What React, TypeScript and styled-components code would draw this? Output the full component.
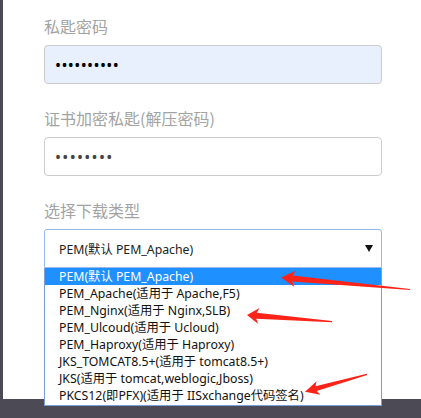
import React from "react";
import styled, { createGlobalStyle } from "styled-components";

const GlobalStyle = createGlobalStyle`
  html, body {
    margin: 0;
    padding: 0;
    background: #4b4a55;
    overflow: hidden;
  }
  * { box-sizing: border-box; }
`;

const FONT = `"Noto Sans", "Noto Sans CJK SC", sans-serif`;

const Screen = styled.div`
  position: relative;
  width: 421px;
  height: 418px;
  padding-left: 3px;
`;

const Panel = styled.div`
  position: relative;
  height: 399px;
  background: #ffffff;
  padding: 15px 0 0 41px;
  font-family: ${FONT};
`;

const Field = styled.div<{ $first?: boolean }>`
  display: flex;
  flex-direction: column;
  margin-top: ${(p) => (p.$first ? 0 : 23)}px;
  width: 338px;
`;

const Label = styled.label`
  display: block;
  font-size: 16px;
  line-height: 22px;
  color: #a3a3a3;
  margin-bottom: 8px;
  font-family: "Noto Sans CJK SC", sans-serif;
`;

const PasswordInput = styled.input<{ $autofill?: boolean; $dot: string; $spacing: number }>`
  width: 338px;
  height: 39px;
  border: 1px solid #cccccc;
  border-radius: 4px;
  background: ${(p) => (p.$autofill ? "#e8f0fe" : "#ffffff")};
  padding: 0 0 0 10px;
  font-size: 16px;
  font-family: "Noto Sans", sans-serif;
  color: ${(p) => p.$dot};
  letter-spacing: ${(p) => p.$spacing}px;
  outline: none;
`;

const SelectWrap = styled.div`
  position: relative;
  width: 338px;
`;

const SelectBox = styled.div`
  display: flex;
  align-items: center;
  justify-content: space-between;
  height: 39px;
  border: 1px solid #98b8ee;
  border-radius: 3px 3px 0 0;
  padding: 0 8px 0 14px;
  font-size: 12.3px;
  color: #222;
  background: #fff;
`;

const Caret = styled.svg`
  width: 8px;
  height: 7px;
  flex: none;
`;

const OptionList = styled.ul`
  position: absolute;
  left: 0;
  top: 39px;
  width: 338px;
  margin: 0;
  padding: 0 0 1px 0;
  list-style: none;
  background: #fff;
  border: 1px solid #7a9fd9;
  border-top: none;
  z-index: 2;
`;

const OptionItem = styled.li<{ $active?: boolean }>`
  height: 17px;
  line-height: 17px;
  padding-left: 14px;
  font-size: 12.3px;
  white-space: nowrap;
  overflow: hidden;
  color: ${(p) => (p.$active ? "#ffffff" : "#111111")};
  background: ${(p) => (p.$active ? "#1e90ff" : "transparent")};
`;

const Overlay = styled.svg`
  position: absolute;
  left: 0;
  top: 0;
  width: 421px;
  height: 418px;
  pointer-events: none;
  z-index: 5;
`;

type Pt = [number, number];

function arrowPoints(tip: Pt, tail: Pt, headLen: number, headHalf: number, shaftHalf: number): string {
  const dx = tail[0] - tip[0];
  const dy = tail[1] - tip[1];
  const len = Math.sqrt(dx * dx + dy * dy);
  const ux = dx / len;
  const uy = dy / len;
  const px = -uy;
  const py = ux;
  const base: Pt = [tip[0] + ux * headLen, tip[1] + uy * headLen];
  const neck: Pt = [tip[0] + ux * (headLen - 2.5), tip[1] + uy * (headLen - 2.5)];
  const pts: Pt[] = [
    tip,
    [base[0] + px * headHalf, base[1] + py * headHalf],
    [neck[0] + px * shaftHalf, neck[1] + py * shaftHalf],
    [tail[0] + px * 0.6, tail[1] + py * 0.6],
    [tail[0] - px * 0.6, tail[1] - py * 0.6],
    [neck[0] - px * shaftHalf, neck[1] - py * shaftHalf],
    [base[0] - px * headHalf, base[1] - py * headHalf],
  ];
  return pts.map((p) => `${p[0].toFixed(1)},${p[1].toFixed(1)}`).join(" ");
}

const options = [
  "PEM(默认 PEM_Apache)",
  "PEM_Apache(适用于 Apache,F5)",
  "PEM_Nginx(适用于 Nginx,SLB)",
  "PEM_Ulcoud(适用于 Ucloud)",
  "PEM_Haproxy(适用于 Haproxy)",
  "JKS_TOMCAT8.5+(适用于 tomcat8.5+)",
  "JKS(适用于 tomcat,weblogic,Jboss)",
  "PKCS12(即PFX)(适用于 IISxchange代码签名)",
];

export default function App() {
  return (
    <>
      <GlobalStyle />
      <Screen>
        <Panel>
          <Field $first>
            <Label>私匙密码</Label>
            <PasswordInput type="password" readOnly value="0123456789" $autofill $dot="#000" $spacing={0.4} />
          </Field>
          <Field>
            <Label>证书加密私匙(解压密码)</Label>
            <PasswordInput type="password" readOnly value="01234567" $dot="#444" $spacing={1.3} />
          </Field>
          <Field>
            <Label>选择下载类型</Label>
            <SelectWrap>
              <SelectBox>
                <span>{options[0]}</span>
                <Caret viewBox="0 0 8 7">
                  <polygon points="0,0 8,0 4,7" fill="#111" />
                </Caret>
              </SelectBox>
              <OptionList>
                {options.map((o, i) => (
                  <OptionItem key={o} $active={i === 0}>
                    {o}
                  </OptionItem>
                ))}
              </OptionList>
            </SelectWrap>
          </Field>
        </Panel>
        <Overlay viewBox="0 0 421 418">
          <polygon points={arrowPoints([281, 277.5], [410, 289.5], 14, 8, 3)} fill="#fc2419" />
          <polygon points={arrowPoints([247, 315], [332, 321.7], 12, 8, 3)} fill="#fc2419" />
          <polygon points={arrowPoints([305, 391.7], [367, 374.3], 14, 7, 2.5)} fill="#fc2419" />
        </Overlay>
      </Screen>
    </>
  );
}
